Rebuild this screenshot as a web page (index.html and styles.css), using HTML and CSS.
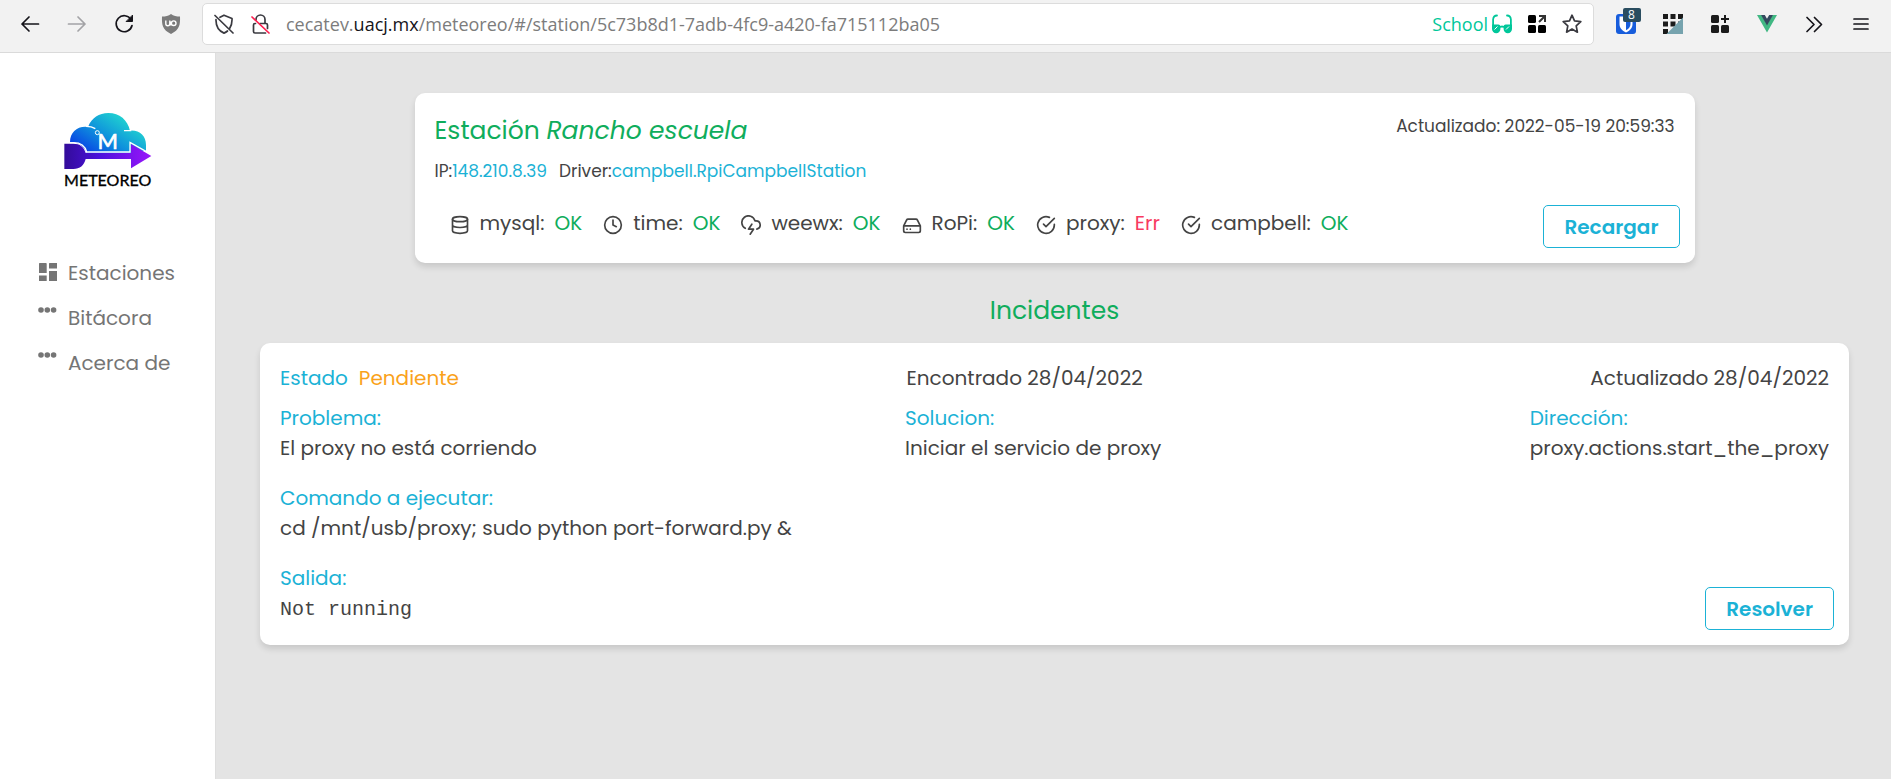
FILE: index.html
```html
<!DOCTYPE html>
<html lang="es">
<head>
<meta charset="utf-8">
<title>Meteoreo</title>
<link rel="stylesheet" href="styles.css">
</head>
<body>
<header class="toolbar">
  <div class="tool-group">
    <button class="tool" aria-label="Atrás"><svg width="20" height="20" viewBox="0 0 20 20" class="line dark"><path d="M18.500 10H2M9 3L2 10l7 7"/></svg></button>
    <button class="tool" aria-label="Adelante"><svg width="20" height="20" viewBox="0 0 20 20" class="line faded"><path d="M1.500 10H18M11 3l7 7-7 7"/></svg></button>
    <button class="tool" aria-label="Recargar página"><svg width="20" height="20" viewBox="0 0 20 20" class="line dark"><path d="M17 5.500A8 8 0 1 0 18 11.500"/><path d="M18.500 1.500v6h-6z" fill="#15141a" stroke-width="1"/></svg></button>
    <button class="tool" aria-label="Bloqueador"><svg width="20" height="20" viewBox="0 0 20 20"><path d="M10 0c2.500 1.800 5.500 2.600 9 2.600C19.300 11 18.500 16 10 20 1.500 16 .7 11 1 2.600 4.500 2.600 7.500 1.800 10 0z" fill="#7b7b7b"/><path d="M4.800 6.500v3.200a2 2 0 0 0 4 0V6.500m1.200 1v4M15 9.200a2.300 2.300 0 1 1-4.600 0 2.300 2.300 0 0 1 4.600 0z" fill="none" stroke="#fff" stroke-width="1.400"/></svg></button>
  </div>
  <div class="address">
    <button class="address-icon" aria-label="Protección"><svg width="20" height="20" viewBox="0 0 20 20" class="line soft"><path d="M6 3.300L10 1.200l8 3.300c.2 4-.4 7-2.400 10M13.500 17c-1 .9-2.200 1.600-3.500 2.100C4 16.500 1.800 12 2 5.500M1 1.500l18 17.500"/></svg></button>
    <button class="address-icon" aria-label="Conexión no segura"><svg width="20" height="20" viewBox="0 0 20 20" class="line soft"><path d="M6 6V5.500a4.500 4.500 0 0 1 9 0V9M10 9.500h6a1.500 1.500 0 0 1 1.500 1.500v3.500M15.500 19H5A1.500 1.500 0 0 1 3.500 17.500V11A1.500 1.500 0 0 1 5 9.500h.5"/><path d="M2 3l17 16" stroke="#ff1f4f"/></svg></button>
    <div class="url" role="textbox" contenteditable="true" spellcheck="false" aria-label="Dirección web">cecatev.<span class="domain">uacj.mx</span>/meteoreo/#/station/5c73b8d1-7adb-4fc9-a420-fa715112ba05</div>
    <button class="school">School <svg width="20" height="20" viewBox="0 0 20 20"><path d="M5 1.500C2.500 1.500 1.300 3 1.100 5.500V13M15 1.500c2.500 0 3.700 1.500 3.900 4V13" fill="none" stroke="#00c79a" stroke-width="1.800" stroke-linecap="round"/><path d="M0 10.500h6.500q1.500 0 2 1.500 1.500-.8 3 0 .5-1.500 2-1.500H20V15a4.200 4.200 0 0 1-8.400 0v-1.200q-1.600-.8-3.200 0V15A4.200 4.200 0 0 1 0 15z" fill="#00c79a"/><path d="M2.500 15.500l3-3M14 15.500l3-3" stroke="#fff" stroke-width="1"/></svg></button>
    <button class="address-icon" aria-label="Contenedor"><svg width="18" height="18" viewBox="0 0 18 18"><rect width="8" height="8" rx="1.500"/><rect y="10" width="8" height="8" rx="1.500"/><rect x="10" y="10" width="8" height="8" rx="1.500"/><path d="M11 1h6v6M17 1l-6 6" fill="none" stroke="#333" stroke-width="2"/></svg></button>
    <button class="address-icon" aria-label="Marcador"><svg width="20" height="20" viewBox="0 0 20 20" class="line soft"><path d="M10 1.200l2.500 5.700 6.300.7-4.600 4.300 1.200 6.300-5.400-3.100-5.400 3.100 1.200-6.300L1.200 7.600l6.300-.7z"/></svg></button>
  </div>
  <div class="tool-group">
    <button class="tool" aria-label="Contraseñas"><span class="badged"><svg width="20" height="20" viewBox="0 0 20 20"><rect width="20" height="20" rx="3" fill="#175ddc"/><path d="M3.500 2.500h13V10c0 4-2.500 6.500-6.500 8.500-4-2-6.500-4.500-6.500-8.500z" fill="#fff"/><path d="M10 4.500h4.500V10c0 2.700-1.500 4.500-4.500 6.200z" fill="#175ddc"/></svg><span class="badge">8</span></span></button>
    <button class="tool" aria-label="Mosaico"><svg width="20" height="20" viewBox="0 0 20 20"><path d="M0 0h5v5H0zM7.500 0h5v5h-5zM15 0h5v5h-5zM0 7.500h5v5H0zM7.500 7.500h5v5h-5zM15 7.500h5v5h-5zM0 15h5v5H0z" fill="#1b1b1b"/><path d="M20 3.500V20H3.500z" fill="#76a3ae"/></svg></button>
    <button class="tool" aria-label="Extensiones"><svg width="18" height="18" viewBox="0 0 18 18" fill="#1b1b1b"><rect width="8" height="8" rx="1.500"/><rect y="10" width="8" height="8" rx="1.500"/><rect x="10" y="10" width="8" height="8" rx="1.500"/><path d="M13 0h2v3h3v2h-3v3h-2V5h-3V3h3z"/></svg></button>
    <button class="tool" aria-label="Vue"><svg width="20" height="18" viewBox="0 0 20 18"><path d="M0 0h4.500L10 9.500 15.500 0H20L10 17.500z" fill="#41b883"/><path d="M4 0h3.800L10 3.800 12.200 0H16L10 10.500z" fill="#34495e"/></svg></button>
    <button class="tool" aria-label="Más herramientas"><svg width="20" height="20" viewBox="0 0 20 20" class="line dark"><path d="M3 3.500l7 7-7 7M10.500 3.500l7 7-7 7"/></svg></button>
    <button class="tool" aria-label="Menú"><svg width="20" height="20" viewBox="0 0 20 20" class="line dark"><path d="M3 5h14M3 10h14M3 15h14"/></svg></button>
  </div>
</header>

<div class="app">
  <aside class="sidebar">
    <svg class="logo" width="90" height="76" viewBox="97 66 270 228" role="img" aria-label="Meteoreo">
      <defs>
        <linearGradient id="cloud" x1="0" y1="1" x2="1" y2="0.200"><stop offset="0" stop-color="#0626e8"/><stop offset="0.500" stop-color="#0f93dc"/><stop offset="1" stop-color="#26e8cc"/></linearGradient>
        <linearGradient id="arrow" x1="0" x2="1"><stop offset="0" stop-color="#330c9a"/><stop offset="0.400" stop-color="#4a11dc"/><stop offset="1" stop-color="#9a16fa"/></linearGradient>
      </defs>
      <path d="M118 156c0-28 20-47 48-46l7-1c10-25 32-40 60-40 34 0 58 21 65 53 29-2 48 15 48 43v18h-44v6H168c-8-20-22-32-50-33z" fill="url(#cloud)"/>
      <path d="M166 109c12 0 20 2 28 7M280 122h22" fill="none" stroke="#fff" stroke-width="4"/>
      <path d="M101 161h27c20 0 32 10 37 28h136v-27l61 36-61 37v-28H165c-5 20-17 30-37 30h-27z" fill="url(#arrow)"/>
      <path d="M118 158h11c20 0 34 9 39 28h130v-29l48 27" fill="none" stroke="#fff" stroke-width="4"/>
      <circle cx="200" cy="128" r="6" fill="none" stroke="#fff" stroke-width="3"/>
      <text x="231" y="177" class="logo-letter">M</text>
      <text x="231" y="287" class="logo-name">METEOREO</text>
    </svg>
    <nav class="menu">
      <a class="menu-item" href="#estaciones"><svg width="20" height="20" viewBox="0 0 20 20"><path d="M1.500 1h6.500q.7 0 .7.700v9.300H1V1.500zM11.500 1h7.500v5.500h-8V1.500zM1 13.500h7.700V19H1zM11 9h8v10h-8z"/></svg>Estaciones</a>
      <a class="menu-item" href="#bitacora"><svg width="20" height="20" viewBox="0 0 20 20"><circle cx="3" cy="3" r="2.800"/><circle cx="9.300" cy="3" r="2.800"/><circle cx="15.600" cy="3" r="2.800"/></svg>Bitácora</a>
      <a class="menu-item" href="#acerca"><svg width="20" height="20" viewBox="0 0 20 20"><circle cx="3" cy="3" r="2.800"/><circle cx="9.300" cy="3" r="2.800"/><circle cx="15.600" cy="3" r="2.800"/></svg>Acerca de</a>
    </nav>
  </aside>

  <main class="content">
    <section class="card station">
      <div class="station-head">
        <h1 class="title">Estación <em>Rancho escuela</em></h1>
        <p class="small">Actualizado: 2022-05-19 20:59:33</p>
      </div>
      <p class="meta small"><span>IP:<span class="info">148.210.8.39</span></span><span>Driver:<span class="info">campbell.RpiCampbellStation</span></span></p>
      <div class="station-foot">
        <ul class="services">
          <li class="service"><svg width="20" height="20" viewBox="0 0 24 24" class="line"><ellipse cx="12" cy="5" rx="9" ry="3"/><path d="M21 12c0 1.660-4 3-9 3s-9-1.340-9-3M3 5v14c0 1.660 4 3 9 3s9-1.340 9-3V5"/></svg>mysql: <span class="ok">OK</span></li>
          <li class="service"><svg width="20" height="20" viewBox="0 0 24 24" class="line"><circle cx="12" cy="12" r="10"/><path d="M12 6v6l4 2"/></svg>time: <span class="ok">OK</span></li>
          <li class="service"><svg width="20" height="20" viewBox="0 0 24 24" class="line"><path d="M19 16.900A5 5 0 0 0 18 7h-1.260a8 8 0 1 0-11.620 9"/><path d="M13 11l-4 6h6l-4 6"/></svg>weewx: <span class="ok">OK</span></li>
          <li class="service"><svg width="20" height="20" viewBox="0 0 24 24" class="line"><path d="M22 13H2M5.450 6.110L2 13v6a2 2 0 0 0 2 2h16a2 2 0 0 0 2-2v-6l-3.450-6.890A2 2 0 0 0 16.760 5H7.240a2 2 0 0 0-1.790 1.110zM6 17h.01M10 17h.01"/></svg>RoPi: <span class="ok">OK</span></li>
          <li class="service"><svg width="20" height="20" viewBox="0 0 24 24" class="line"><path d="M22 11.080V12a10 10 0 1 1-5.930-9.140"/><path d="M22 4L12 14.010l-3-3"/></svg>proxy: <span class="err">Err</span></li>
          <li class="service"><svg width="20" height="20" viewBox="0 0 24 24" class="line"><path d="M22 11.080V12a10 10 0 1 1-5.930-9.140"/><path d="M22 4L12 14.010l-3-3"/></svg>campbell: <span class="ok">OK</span></li>
        </ul>
        <button class="action">Recargar</button>
      </div>
    </section>

    <h2 class="title">Incidentes</h2>

    <section class="card incident">
      <div class="incident-row">
        <p class="state"><span class="info">Estado</span><span class="pending">Pendiente</span></p>
        <p>Encontrado 28/04/2022</p>
        <p>Actualizado 28/04/2022</p>
      </div>
      <div class="incident-row">
        <div><h3 class="info">Problema:</h3><p>El proxy no está corriendo</p></div>
        <div><h3 class="info">Solucion:</h3><p>Iniciar el servicio de proxy</p></div>
        <div><h3 class="info">Dirección:</h3><p>proxy.actions.start_the_proxy</p></div>
      </div>
      <div class="block"><h3 class="info">Comando a ejecutar:</h3><p>cd /mnt/usb/proxy; sudo python port-forward.py &amp;</p></div>
      <div class="incident-foot">
        <div><h3 class="info">Salida:</h3><pre class="output">Not running</pre></div>
        <button class="action">Resolver</button>
      </div>
    </section>
  </main>
</div>
</body>
</html>
```

FILE: styles.css
```css
* { box-sizing: border-box; }

body {
  margin: 0;
  min-height: 100vh;
  display: flex;
  flex-direction: column;
  font: 400 20px/30px Poppins, Inter, sans-serif;
  color: #444;
  background: #e4e4e4;
}

h1, h2, h3, p, ul, pre { margin: 0; padding: 0; font-weight: 400; font-size: inherit; }
button { font: inherit; color: inherit; background: none; border: 0; padding: 0; }
svg { display: block; flex: none; }

.line { fill: none; stroke: currentColor; stroke-width: 2; stroke-linecap: round; stroke-linejoin: round; }
.line.dark { color: #15141a; stroke-width: 1.700; }
.line.soft { color: #3a3a40; stroke-width: 1.700; }
.line.faded { color: #a3a3a6; stroke-width: 1.700; }

/* Browser toolbar */
.toolbar {
  display: flex;
  align-items: center;
  gap: 8px;
  height: 53px;
  padding: 0 7px 4px 6px;
  background: #f2f2f2;
  border-bottom: 1px solid #dadada;
  font: 18px/24px "Open Sans", "Noto Sans", sans-serif;
}
.tool-group { display: flex; }
.tool { width: 47px; height: 40px; display: grid; place-items: center; }
.address {
  flex: 1;
  min-width: 0;
  height: 42px;
  display: flex;
  align-items: center;
  gap: 16px;
  padding: 0 11px;
  background: #fff;
  border: 1px solid #dcdcdc;
  border-radius: 5px;
}
.url { flex: 1; min-width: 0; overflow: hidden; white-space: nowrap; color: #7c7c7c; }
.domain { color: #15141a; }
.school { display: flex; align-items: center; gap: 4px; color: #00c79a; }
.badged { position: relative; }
.badge {
  position: absolute;
  top: -6px;
  left: 7px;
  width: 18px;
  border-radius: 2px;
  background: #2a4d60;
  color: #fff;
  font-size: 12px;
  line-height: 14px;
}

/* Application shell */
.app { flex: 1; display: flex; }
.sidebar {
  flex: none;
  width: 216px;
  padding: 59px 12px 0 38px;
  background: #fff;
  border-right: 1px solid #dedede;
  color: #757575;
}
.logo { margin-left: 25px; }
.logo-letter { font: 400 66px Lato, sans-serif; fill: #fff; stroke: #fff; stroke-width: 2; text-anchor: middle; }
.logo-name { font: 400 48px Lato, sans-serif; fill: #000; stroke: #000; stroke-width: 1; text-anchor: middle; }
.menu { display: flex; flex-direction: column; gap: 15px; margin-top: 70px; }
.menu-item { display: flex; gap: 10px; color: inherit; text-decoration: none; }
.menu-item svg { margin-top: 4px; fill: #757575; }

.content {
  flex: 1;
  min-width: 0;
  display: flex;
  flex-direction: column;
  align-items: center;
  padding: 40px 42px 40px 44px;
}
.card {
  width: 100%;
  padding: 20px;
  background: #fff;
  border-radius: 10px;
  box-shadow: 0 4px 6px rgba(0, 0, 0, 0.12);
}
.title { font-size: 25px; line-height: 36px; color: #0fad5c; }
.small { font-size: 17px; line-height: 26px; }
.info { color: #1bb2d6; }
.ok { color: #0fad5c; }
.err { color: #f83a60; }
.pending { color: #faa21b; }

.action {
  height: 43px;
  padding: 0 20px;
  border: 1px solid #1bb2d6;
  border-radius: 5px;
  color: #1bb2d6;
  font-weight: 600;
  white-space: nowrap;
}

/* Station summary */
.station { max-width: 1280px; margin-bottom: 30px; padding-bottom: 15px; }
.station-head { display: flex; justify-content: space-between; }
.meta { display: flex; gap: 12px; margin-top: 9px; }
.station-foot { display: flex; justify-content: space-between; align-items: flex-start; margin-top: 21px; margin-right: -5px; }
.services { display: flex; gap: 21px; padding: 3px 0 0 15px; list-style: none; }
.service { display: flex; align-items: center; gap: 10px; }
.service svg { margin-top: 3px; }

/* Incident */
.incident { margin-top: 14px; }
.incident-row { display: flex; justify-content: space-between; }
.incident-row + .incident-row { margin-top: 10px; }
.state { display: flex; gap: 11px; }
.block { margin-top: 20px; }
.incident-foot { display: flex; justify-content: space-between; align-items: flex-end; margin: 20px -5px -5px 0; }
.incident-foot > div { padding-bottom: 3px; }
.output { font: 20px/34px "Liberation Mono", monospace; }
```
